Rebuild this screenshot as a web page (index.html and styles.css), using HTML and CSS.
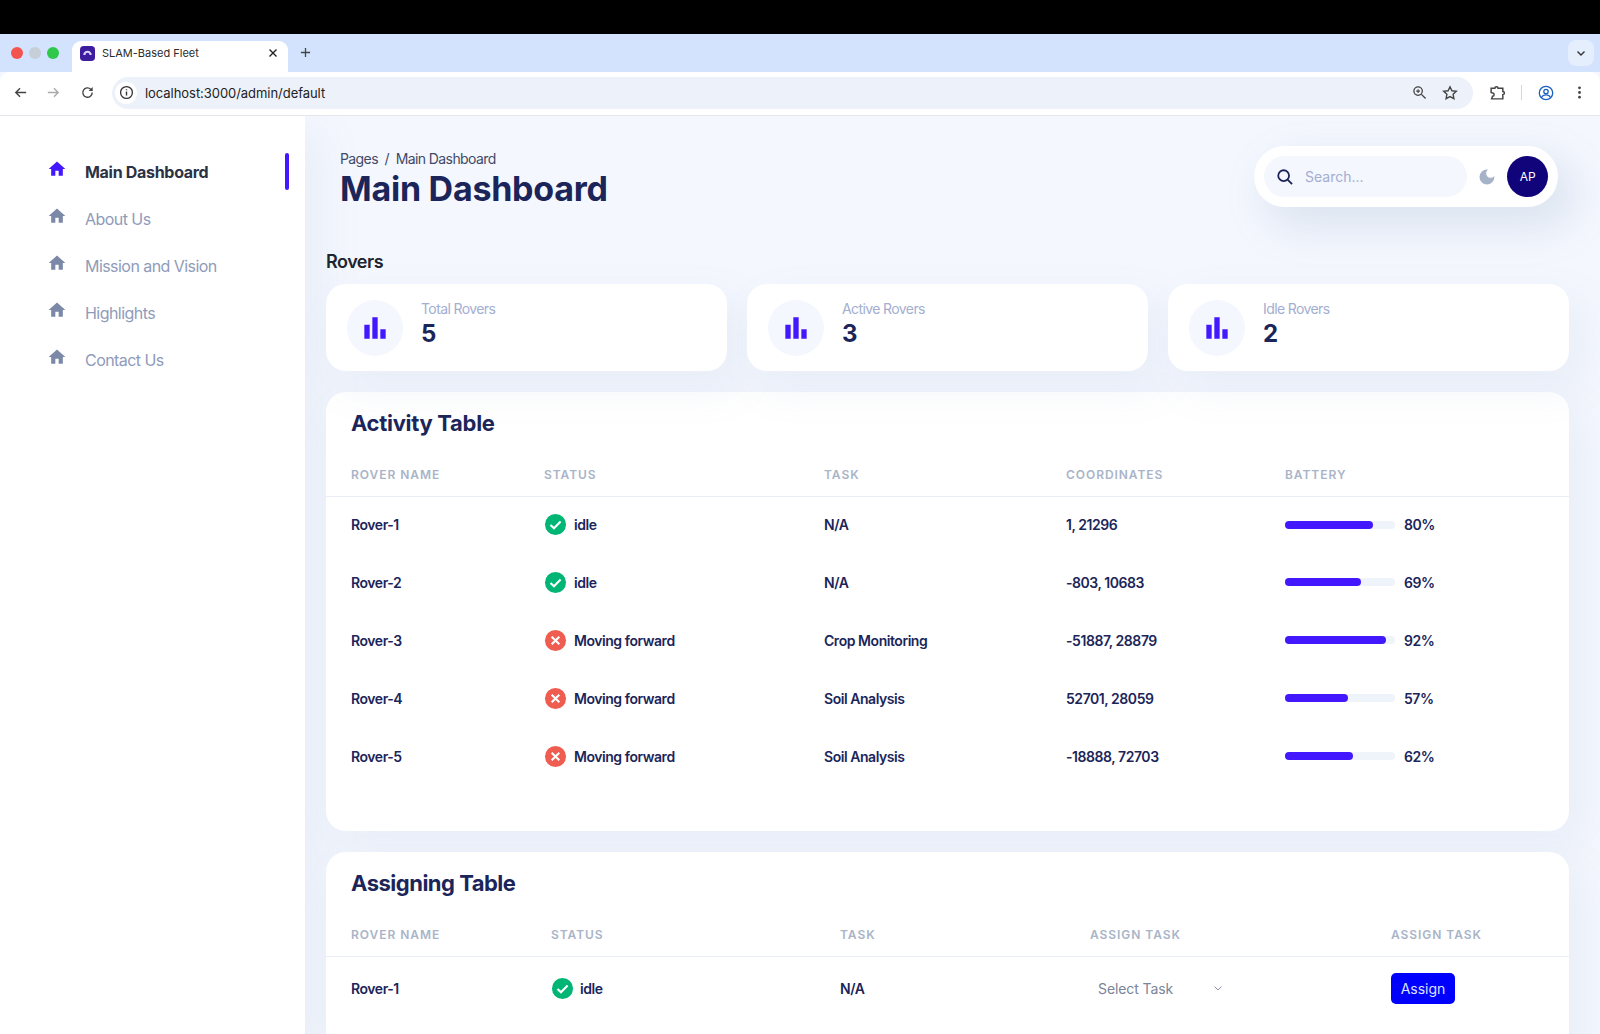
FILE: index.html
```html
<!DOCTYPE html>
<html lang="en">
<head>
<meta charset="UTF-8">
<title>SLAM-Based Fleet</title>
<link rel="stylesheet" href="styles.css">
</head>
<body>
<svg class="defs" width="0" height="0">
    <symbol id="home" viewBox="0 0 24 24"><path d="M10 20v-6h4v6h5v-8h3L12 3 2 12h3v8z"/></symbol>
    <symbol id="bars" viewBox="0 0 24 24"><path d="M4 9.5h4V20H4zM10 4h4v16h-4zm6 9h4v7h-4z"/></symbol>
    <symbol id="ok" viewBox="0 0 24 24"><circle cx="12" cy="12" r="11" fill="#01b574"/><path d="M6.8 12.4l3.6 3.6 6.9-7.2" fill="none" stroke="#fff" stroke-width="2.2"/></symbol>
    <symbol id="bad" viewBox="0 0 24 24"><circle cx="12" cy="12" r="11" fill="#ee5d50"/><path d="M8 8l8 8M16 8l-8 8" fill="none" stroke="#fff" stroke-width="2.2"/></symbol>
</svg>

<div class="blackbar"></div>

<div class="tabstrip">
    <div class="lights">
        <span class="light red"></span>
        <span class="light grey"></span>
        <span class="light green"></span>
    </div>
    <div class="tab">
        <svg class="favicon" viewBox="0 0 16 16"><rect width="16" height="16" rx="4" fill="#3d1d9e"/><path d="M3.5 9.5a4.5 4.5 0 0 1 9 0z" fill="#d9d4f5"/><path d="M5.8 9.5a2.2 2.2 0 0 1 4.4 0z" fill="#3d1d9e"/></svg>
        <span class="tab-title">SLAM-Based Fleet</span>
        <svg class="tab-close" viewBox="0 0 10 10"><path d="M1.5 1.5l7 7M8.5 1.5l-7 7" stroke="#222" stroke-width="1.4"/></svg>
    </div>
    <svg class="tab-new" viewBox="0 0 12 12"><path d="M6 1v10M1 6h10" stroke="#444" stroke-width="1.4"/></svg>
    <div class="tab-menu">
        <svg viewBox="0 0 10 10" width="10" height="10"><path d="M1.5 3.5L5 7l3.5-3.5" fill="none" stroke="#333" stroke-width="1.4"/></svg>
    </div>
</div>

<div class="toolbar">
    <svg class="tool back" viewBox="0 0 16 16"><path d="M14 8H3M7.5 3.5L3 8l4.5 4.5" fill="none" stroke="#444" stroke-width="1.5"/></svg>
    <svg class="tool forward" viewBox="0 0 16 16"><path d="M2 8h11M8.5 3.5L13 8l-4.5 4.5" fill="none" stroke="#aaa" stroke-width="1.5"/></svg>
    <svg class="tool reload" viewBox="0 0 16 16"><path d="M13 8a5 5 0 1 1-1.5-3.5L13 6" fill="none" stroke="#444" stroke-width="1.5"/><path d="M13.5 2.2v4.3H9.2z" fill="#444"/></svg>
    <div class="address">
        <span class="info">
            <svg viewBox="0 0 16 16" width="15" height="15"><circle cx="8" cy="8" r="6.3" fill="none" stroke="#333" stroke-width="1.4"/><path d="M8 7v4.2M8 4.5v1.2" stroke="#333" stroke-width="1.5"/></svg>
        </span>
        <span class="url">localhost:3000/admin/default</span>
        <svg class="addr-icon" viewBox="0 0 16 16"><circle cx="6.5" cy="6.5" r="4.5" fill="none" stroke="#444" stroke-width="1.4"/><path d="M10 10l4.5 4.5" stroke="#444" stroke-width="1.5"/><path d="M6.5 4.5v4M4.5 6.5h4" stroke="#444" stroke-width="1.2"/></svg>
        <svg class="addr-icon star" viewBox="0 0 16 16"><path d="M8 1.8l1.9 4 4.4.5-3.2 3 .8 4.4L8 11.6l-3.9 2.1.8-4.4-3.2-3 4.4-.5z" fill="none" stroke="#444" stroke-width="1.4"/></svg>
    </div>
    <svg class="tool puzzle" viewBox="0 0 16 16"><path d="M2 4h3.500a1.500 1.500 0 0 1 3 0H13v3a1.500 1.500 0 0 1 0 3v4H2.500l.8-2.500a1.500 1.500 0 0 0 0-3L2 8z" fill="none" stroke="#444" stroke-width="1.4"/></svg>
    <span class="tool-sep"></span>
    <svg class="tool profile" viewBox="0 0 16 16"><circle cx="8" cy="8" r="6.700" fill="none" stroke="#1a5fc4" stroke-width="1.300"/><circle cx="8" cy="6.500" r="2.200" fill="none" stroke="#1a5fc4" stroke-width="1.300"/><path d="M3.500 12.500c1-2 2.500-2.600 4.500-2.600s3.500.6 4.500 2.600" fill="none" stroke="#1a5fc4" stroke-width="1.300"/></svg>
    <svg class="tool dots" viewBox="0 0 16 16"><circle cx="8" cy="3" r="1.500" fill="#444"/><circle cx="8" cy="8" r="1.500" fill="#444"/><circle cx="8" cy="13" r="1.500" fill="#444"/></svg>
</div>

<div class="app">
    <aside class="sidebar">
        <a class="nav-item active"><svg class="nav-icon"><use href="#home"/></svg><span>Main Dashboard</span></a>
        <a class="nav-item"><svg class="nav-icon"><use href="#home"/></svg><span>About Us</span></a>
        <a class="nav-item"><svg class="nav-icon"><use href="#home"/></svg><span>Mission and Vision</span></a>
        <a class="nav-item"><svg class="nav-icon"><use href="#home"/></svg><span>Highlights</span></a>
        <a class="nav-item"><svg class="nav-icon"><use href="#home"/></svg><span>Contact Us</span></a>
    </aside>

    <main class="main">
        <header class="page-head">
            <div>
                <div class="crumbs">Pages &nbsp;/&nbsp; Main Dashboard</div>
                <h1>Main Dashboard</h1>
            </div>
            <div class="search-bar">
                <div class="search">
                    <svg viewBox="0 0 16 16" width="18" height="18"><circle cx="6.800" cy="6.800" r="4.800" fill="none" stroke="#1b2559" stroke-width="1.600"/><path d="M10.300 10.300l4 4" stroke="#1b2559" stroke-width="1.600"/></svg>
                    <input type="text" placeholder="Search...">
                </div>
                <svg class="moon" viewBox="0 0 24 24"><path d="M12 3a9 9 0 1 0 9 9c0-.46-.04-.92-.1-1.360a5.389 5.389 0 0 1-4.400 2.260 5.403 5.403 0 0 1-3.140-9.800c-.44-.06-.9-.1-1.360-.1z"/></svg>
                <div class="avatar">AP</div>
            </div>
        </header>

        <h2 class="section">Rovers</h2>
        <div class="stats">
            <div class="stat">
                <div class="stat-icon"><svg><use href="#bars"/></svg></div>
                <div class="stat-text"><div class="stat-label">Total Rovers</div><div class="stat-value">5</div></div>
            </div>
            <div class="stat">
                <div class="stat-icon"><svg><use href="#bars"/></svg></div>
                <div class="stat-text"><div class="stat-label">Active Rovers</div><div class="stat-value">3</div></div>
            </div>
            <div class="stat">
                <div class="stat-icon"><svg><use href="#bars"/></svg></div>
                <div class="stat-text"><div class="stat-label">Idle Rovers</div><div class="stat-value">2</div></div>
            </div>
        </div>

        <section class="card activity">
            <h3>Activity Table</h3>
            <table>
                <thead>
                    <tr><th>Rover Name</th><th>Status</th><th>Task</th><th>Coordinates</th><th>Battery</th></tr>
                </thead>
                <tbody>
                    <tr>
                        <td>Rover-1</td>
                        <td><div class="status"><svg><use href="#ok"/></svg>idle</div></td>
                        <td>N/A</td>
                        <td>1, 21296</td>
                        <td><div class="battery"><div class="track"><div class="fill" style="width:80%"></div></div>80%</div></td>
                    </tr>
                    <tr>
                        <td>Rover-2</td>
                        <td><div class="status"><svg><use href="#ok"/></svg>idle</div></td>
                        <td>N/A</td>
                        <td>-803, 10683</td>
                        <td><div class="battery"><div class="track"><div class="fill" style="width:69%"></div></div>69%</div></td>
                    </tr>
                    <tr>
                        <td>Rover-3</td>
                        <td><div class="status"><svg><use href="#bad"/></svg>Moving forward</div></td>
                        <td>Crop Monitoring</td>
                        <td>-51887, 28879</td>
                        <td><div class="battery"><div class="track"><div class="fill" style="width:92%"></div></div>92%</div></td>
                    </tr>
                    <tr>
                        <td>Rover-4</td>
                        <td><div class="status"><svg><use href="#bad"/></svg>Moving forward</div></td>
                        <td>Soil Analysis</td>
                        <td>52701, 28059</td>
                        <td><div class="battery"><div class="track"><div class="fill" style="width:57%"></div></div>57%</div></td>
                    </tr>
                    <tr>
                        <td>Rover-5</td>
                        <td><div class="status"><svg><use href="#bad"/></svg>Moving forward</div></td>
                        <td>Soil Analysis</td>
                        <td>-18888, 72703</td>
                        <td><div class="battery"><div class="track"><div class="fill" style="width:62%"></div></div>62%</div></td>
                    </tr>
                </tbody>
            </table>
        </section>

        <section class="card assigning">
            <h3>Assigning Table</h3>
            <table>
                <thead>
                    <tr><th>Rover Name</th><th>Status</th><th>Task</th><th>Assign Task</th><th>Assign Task</th></tr>
                </thead>
                <tbody>
                    <tr>
                        <td>Rover-1</td>
                        <td><div class="status"><svg><use href="#ok"/></svg>idle</div></td>
                        <td>N/A</td>
                        <td>
                            <div class="select">Select Task
                                <svg viewBox="0 0 10 10" width="10" height="10"><path d="M1.500 3.500L5 7l3.500-3.500" fill="none" stroke="#8a94a6" stroke-width="1"/></svg>
                            </div>
                        </td>
                        <td><button class="assign">Assign</button></td>
                    </tr>
                </tbody>
            </table>
        </section>
    </main>
</div>
</body>
</html>
```

FILE: styles.css
```css
* {
    box-sizing: border-box;
}
body {
    margin: 0;
    height: 1034px;
    overflow: hidden;
    font-family: Inter, "Noto Sans", sans-serif;
    color: #1b2559;
    background-color: #f4f7fe;
}
.defs {
    display: block;
    height: 0;
}

/* browser window */
.blackbar {
    height: 34px;
    background-color: #000;
}
.tabstrip {
    height: 38px;
    background-color: #d3e3fd;
    display: flex;
    align-items: flex-end;
}
.lights {
    display: flex;
    gap: 6px;
    padding: 0 0 13px 11px;
    width: 72px;
}
.light {
    width: 12px;
    height: 12px;
    border-radius: 50%;
}
.light.red { background-color: #f4544e; }
.light.grey { background-color: #c8ced8; }
.light.green { background-color: #2fc84a; }
.tab {
    width: 216px;
    height: 31px;
    background-color: #fff;
    border-radius: 9px 9px 0 0;
    display: flex;
    align-items: center;
    padding: 0 10px 7px 8px;
    font-size: 11px;
    color: #2b2b2b;
}
.favicon {
    width: 15px;
    height: 15px;
    margin-right: 7px;
}
.tab-title {
    flex: 1;
}
.tab-close {
    width: 10px;
    height: 10px;
}
.tab-new {
    width: 11px;
    height: 11px;
    margin: 0 0 14px 12px;
}
.tab-menu {
    margin: 0 6px 6px auto;
    width: 26px;
    height: 26px;
    border-radius: 8px;
    background-color: #e5eefd;
    display: flex;
    align-items: center;
    justify-content: center;
}
.toolbar {
    height: 44px;
    background-color: #fff;
    border-bottom: 1px solid #e3e6eb;
    border-radius: 9px 9px 0 0;
    display: flex;
    align-items: center;
    padding: 0 0 2px 13px;
}
.tool {
    width: 15px;
    height: 15px;
    flex: none;
}
.forward { margin-left: 18px; }
.reload { margin-left: 19px; }
.address {
    margin-left: 17px;
    width: 1361px;
    height: 32px;
    border-radius: 16px;
    background-color: #edf2fa;
    display: flex;
    align-items: center;
    padding: 0 15px 0 3px;
}
.info {
    width: 22px;
    height: 22px;
    border-radius: 50%;
    background-color: #fff;
    display: flex;
    align-items: center;
    justify-content: center;
}
.url {
    flex: 1;
    margin-left: 8px;
    font-size: 13px;
    letter-spacing: -0.05px;
    color: #222;
}
.addr-icon {
    width: 15px;
    height: 15px;
}
.addr-icon.star {
    margin-left: 15px;
    width: 16px;
    height: 16px;
}
.puzzle {
    margin-left: 16px;
    width: 17px;
    height: 17px;
}
.tool-sep {
    width: 1px;
    height: 15px;
    background-color: #c9d8f0;
    margin: 0 16px 0 15px;
}
.profile {
    width: 16px;
    height: 16px;
}
.dots {
    margin-left: 18px;
}

/* page */
.app {
    display: flex;
    height: 918px;
    overflow: hidden;
}
.sidebar {
    width: 305px;
    flex: none;
    background-color: #fff;
    padding-top: 32px;
    box-shadow: 14px 17px 40px 4px rgba(112, 144, 176, 0.08);
}
.nav-item {
    display: flex;
    align-items: center;
    height: 47px;
    padding-left: 47px;
    font-size: 16px;
    letter-spacing: -0.55px;
    color: #8f9bba;
}
.nav-item span {
    margin-left: 18px;
}
.nav-icon {
    width: 20px;
    height: 20px;
    fill: #7b88a8;
    margin-top: -6px;
}
.nav-item.active {
    color: #2b3245;
    font-weight: 700;
    letter-spacing: -0.3px;
    margin-right: 16px;
}
.nav-item.active::after {
    content: "";
    margin-left: auto;
    width: 4px;
    height: 37px;
    border-radius: 2px;
    background-color: #4318ff;
}
.nav-item.active .nav-icon {
    fill: #4318ff;
}
.main {
    flex: 1;
    padding: 0 31px 0 21px;
    min-width: 0;
}
.page-head {
    display: flex;
    justify-content: space-between;
    align-items: flex-start;
    padding: 30px 11px 0 14px;
    height: 134px;
}
.crumbs {
    font-size: 14px;
    color: #414a66;
    letter-spacing: -0.6px;
    line-height: 21px;
    margin-top: 2px;
}
h1 {
    margin: 0;
    font-size: 34px;
    line-height: 40px;
    font-weight: 700;
    letter-spacing: -0.25px;
}
.search-bar {
    width: 304px;
    height: 61px;
    background-color: #fff;
    border-radius: 31px;
    display: flex;
    align-items: center;
    padding: 0 10px;
    box-shadow: 14px 17px 40px 4px rgba(112, 144, 176, 0.18);
}
.search {
    width: 205px;
    height: 41px;
    border-radius: 21px;
    background-color: #f4f7fe;
    display: flex;
    align-items: center;
    padding-left: 12px;
    gap: 11px;
}
.search input {
    border: 0;
    outline: 0;
    background: transparent;
    font: inherit;
    font-size: 14px;
    width: 140px;
    padding: 0;
}
.search input::placeholder {
    color: #a3aed0;
}
.moon {
    width: 20px;
    height: 20px;
    fill: #a6b2c8;
    margin-left: 10px;
}
.avatar {
    width: 41px;
    height: 41px;
    border-radius: 50%;
    margin-left: 10px;
    background-color: #11047a;
    color: #fff;
    font-size: 12px;
    font-weight: 400;
    display: flex;
    align-items: center;
    justify-content: center;
}
.section {
    margin: 0 0 10px;
    font-size: 18px;
    line-height: 24px;
    font-weight: 600;
    letter-spacing: -0.5px;
    color: #20242f;
}
.stats {
    display: grid;
    grid-template-columns: repeat(3, 1fr);
    gap: 20px;
}
.stat, .card {
    background-color: #fff;
    border-radius: 20px;
    box-shadow: 14px 17px 40px 4px rgba(112, 144, 176, 0.08);
}
.stat {
    height: 87px;
    display: flex;
    align-items: center;
    padding-left: 21px;
    gap: 18px;
}
.stat-text {
    padding-bottom: 8px;
}
.stat-icon {
    width: 56px;
    height: 56px;
    border-radius: 50%;
    background-color: #f4f7fe;
    display: flex;
    align-items: center;
    justify-content: center;
}
.stat-icon svg {
    width: 32px;
    height: 32px;
    fill: #4318ff;
}
.stat-label {
    font-size: 14px;
    line-height: 21px;
    letter-spacing: -0.6px;
    color: #a3aed0;
}
.stat-value {
    font-size: 24px;
    line-height: 30px;
    font-weight: 700;
}
.card {
    margin-top: 21px;
}
.card h3 {
    margin: 0;
    padding-left: 25px;
    font-size: 22px;
    line-height: 30px;
    font-weight: 700;
    letter-spacing: -0.3px;
}
.activity {
    height: 439px;
    padding-top: 16px;
}
.assigning {
    height: 400px;
    padding-top: 16px;
}
.assigning h3 {
    letter-spacing: -0.5px;
}
table {
    width: 100%;
    border-collapse: collapse;
    table-layout: fixed;
}
th {
    text-align: left;
    font-size: 12px;
    font-weight: 600;
    letter-spacing: 0.95px;
    text-transform: uppercase;
    color: #a9b4c8;
    border-bottom: 1px solid #e9edf7;
    padding: 0 0 0 25px;
}
td {
    padding: 0 0 0 25px;
    font-size: 14px;
    font-weight: 600;
    letter-spacing: -0.45px;
}
.activity thead tr { height: 39px; }
.activity th { padding-bottom: 4px; }
.activity table { margin-top: 19px; }
.activity tbody tr { height: 58px; }
.activity tbody tr:first-child { height: 57px; }
.activity th:nth-child(1) { width: 193px; }
.activity th:nth-child(2) { width: 280px; }
.activity th:nth-child(3) { width: 242px; }
.activity th:nth-child(4) { width: 219px; }

.assigning thead tr { height: 42px; }
.assigning table { margin-top: 16px; }
.assigning tbody tr { height: 64px; }
.assigning th:nth-child(1) { width: 200px; }
.assigning th:nth-child(2) { width: 289px; }
.assigning th:nth-child(3) { width: 250px; }
.assigning th:nth-child(4) { width: 301px; }
.assigning .status { gap: 6px; }

.status {
    display: flex;
    align-items: center;
    gap: 7px;
}
.status svg {
    width: 23px;
    height: 23px;
    flex: none;
}
.battery {
    display: flex;
    align-items: center;
    gap: 9px;
}
.track {
    width: 110px;
    height: 8px;
    border-radius: 4px;
    background-color: #eff4fb;
}
.fill {
    height: 8px;
    border-radius: 4px;
    background-color: #4318ff;
}
.select {
    display: flex;
    align-items: center;
    gap: 40px;
    padding-left: 8px;
    font-weight: 400;
    letter-spacing: -0.1px;
    color: #7b8499;
}
.assign {
    width: 64px;
    height: 31px;
    border: 0;
    border-radius: 5px;
    background-color: #0000ff;
    color: #dfe3ff;
    font: inherit;
    font-weight: 400;
    letter-spacing: 0;
}
```
